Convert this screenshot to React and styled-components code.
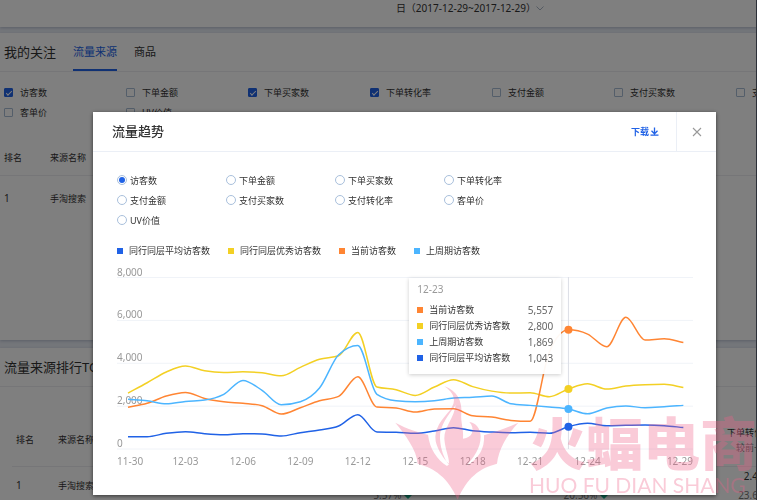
import React, { useState } from "react";
import styled, { createGlobalStyle, css } from "styled-components";

const METRICS = [
  "访客数",
  "下单金额",
  "下单买家数",
  "下单转化率",
  "支付金额",
  "支付买家数",
  "支付转化率",
  "客单价",
  "UV价值"
];

const COLORS = {
  average: "#2062e6",
  top: "#f3d024",
  current: "#ff8533",
  previous: "#4cb5ff"
};

const SERIES = [
  {
    key: "average",
    label: "同行同层平均访客数",
    data: [
      573, 573, 732, 806, 713, 666, 713, 700, 606, 760, 885, 1072, 1600, 792,
      778, 732, 839, 993, 853, 792, 760, 778, 732, 1043, 1198, 1086, 1104,
      1118, 1086, 1002
    ]
  },
  {
    key: "top",
    label: "同行同层优秀访客数",
    data: [
      2610, 3090, 3590, 3870, 3650, 3570, 3600, 3555, 3415, 3810, 4190, 4350,
      5440, 2890, 2765, 2500, 2890, 3230, 2910, 2700, 2610, 2625, 2440, 2800,
      3040, 2795, 2935, 2995, 3015, 2865
    ]
  },
  {
    key: "current",
    label: "当前访客数",
    data: [
      1945, 2130, 2470, 2640, 2360, 2205, 2130, 2020, 1630, 1925, 2250, 2455,
      3370, 1955, 1910, 1725, 1865, 1875, 1550, 1490, 1335, 1290, 4520, 5557,
      5360, 4770, 6140, 5080, 5140, 4970
    ]
  },
  {
    key: "previous",
    label: "上周期访客数",
    data: [
      2315, 2250, 2110, 2220, 2285, 2550, 3200, 2735, 2065, 2205, 2845, 4395,
      4830, 2550, 2250, 2205, 2250, 2375, 2410, 2470, 2110, 2035, 1955, 1869,
      1645, 1910, 2005, 1925, 1970, 2035
    ]
  }
];

const TICKS = [
  [0, "11-30"],
  [3, "12-03"],
  [6, "12-06"],
  [9, "12-09"],
  [12, "12-12"],
  [15, "12-15"],
  [18, "12-18"],
  [21, "12-21"],
  [24, "12-24"],
  [29, "12-29"]
];

const HOVERED = 23;
const TOOLTIP_ORDER = ["current", "top", "previous", "average"];

const xAt = i => 11 + i * 19.15;
const yAt = v => 184 - (v / 8000) * 171.5;

// cubic path that never overshoots its points
const smoothPath = data => {
  const pts = data.map((v, i) => [xAt(i), yAt(v)]);
  const n = pts.length;
  const slopes = pts
    .slice(1)
    .map((p, i) => (p[1] - pts[i][1]) / (p[0] - pts[i][0]));
  const tangents = pts.map((_, i) => {
    if (i === 0) return slopes[0];
    if (i === n - 1) return slopes[n - 2];
    const a = slopes[i - 1];
    const b = slopes[i];
    if (a * b <= 0) return 0;
    return (
      Math.sign(a) *
      Math.min(Math.abs(a), Math.abs(b), Math.abs(a + b) / 4) *
      2
    );
  });
  let d = `M${pts[0][0]},${pts[0][1]}`;
  for (let i = 1; i < n; i++) {
    const [x0, y0] = pts[i - 1];
    const [x1, y1] = pts[i];
    const h = (x1 - x0) / 3;
    d += `C${x0 + h},${y0 + tangents[i - 1] * h},${x1 - h},${
      y1 - tangents[i] * h
    },${x1},${y1}`;
  }
  return d;
};

const TrendChart = () => (
  <ChartBox>
    <Chart viewBox="0 0 577 204" role="img" aria-label="流量趋势">
      {[0, 2000, 4000, 6000, 8000].map(v => (
        <g key={v}>
          <GridLine x1="0" x2="576" y1={yAt(v)} y2={yAt(v)} />
          <AxisText x="0" y={yAt(v) - 2}>
            {v.toLocaleString("en-US")}
          </AxisText>
        </g>
      ))}
      {TICKS.map(([i, label]) => (
        <AxisText
          key={label}
          x={i === 0 ? 0 : i === 29 ? 576 : xAt(i)}
          y="200"
          textAnchor={i === 0 ? "start" : i === 29 ? "end" : "middle"}
        >
          {label}
        </AxisText>
      ))}
      <Crosshair x1={xAt(HOVERED)} x2={xAt(HOVERED)} y1="12" y2="184" />
      {SERIES.map(s => (
        <g key={s.key}>
          <Line d={smoothPath(s.data)} stroke={COLORS[s.key]} />
          <circle
            cx={xAt(HOVERED)}
            cy={yAt(s.data[HOVERED])}
            r="4"
            fill={COLORS[s.key]}
          />
        </g>
      ))}
    </Chart>
    <Tooltip>
      <TooltipDate>12-23</TooltipDate>
      {TOOLTIP_ORDER.map(key => {
        const s = SERIES.find(item => item.key === key);
        return (
          <TooltipRow key={key}>
            <Swatch color={COLORS[key]} />
            {s.label}
            <TooltipValue>
              {s.data[HOVERED].toLocaleString("en-US")}
            </TooltipValue>
          </TooltipRow>
        );
      })}
    </Tooltip>
  </ChartBox>
);

const Watermark = () => (
  <Mark aria-hidden="true">
    <MarkLogo viewBox="0 0 372 342">
      <g transform="translate(-12 -17)">
        <path
          fillRule="evenodd"
          d="M13 127C50 147 85 157 111 163C116 205 138 238 168 257L175 251C158 238 140 208 134 183C128 145 152 118 178 88C198 62 190 38 160 18C197 30 214 62 211 98C208 124 219 148 216 175C230 173 239 168 243 158C247 147 244 135 235 125C255 127 268 145 269 168C269 205 247 232 227 256C262 236 282 205 279 165C315 153 350 142 382 127C346 165 322 210 318 250C266 263 228 292 200 358C172 292 130 263 80 250C78 210 42 162 13 127ZM194 74C172 105 145 135 147 175C149 208 160 236 173 252C178 240 162 207 160 175C159 140 190 112 194 74Z"
        />
      </g>
    </MarkLogo>
    <MarkText>
      <MarkName>火蝠电商</MarkName>
      <MarkLatin>HUO FU DIAN SHANG</MarkLatin>
    </MarkText>
  </Mark>
);

const App = () => {
  const [metric, setMetric] = useState("访客数");
  const [checked, setChecked] = useState(["访客数", "下单买家数", "下单转化率"]);

  const toggle = m =>
    setChecked(
      checked.includes(m) ? checked.filter(c => c !== m) : [...checked, m]
    );

  return (
    <Page>
      <Global />
      <TopBar>
        <DateButton type="button">
          日（2017-12-29~2017-12-29）
          <svg width="8" height="5" viewBox="0 0 8 5" fill="none">
            <path d="M0.5 0.5L4 4L7.5 0.5" stroke="#a9b4c4" />
          </svg>
        </DateButton>
      </TopBar>

      <Panel grow>
        <TabBar>
          <Heading>我的关注</Heading>
          <Tab type="button" active>
            流量来源
          </Tab>
          <Tab type="button">商品</Tab>
        </TabBar>
        <CheckGrid>
          {METRICS.map(m => (
            <Option key={m} gap={7}>
              <Checkbox
                type="checkbox"
                checked={checked.includes(m)}
                onChange={() => toggle(m)}
              />
              {m}
            </Option>
          ))}
        </CheckGrid>
        <Table>
          <colgroup>
            <Col w={50} />
            <col />
          </colgroup>
          <thead>
            <Row h={35}>
              <th>排名</th>
              <th>来源名称</th>
            </Row>
          </thead>
          <tbody>
            <Row h={47} plain>
              <td>
                <Num>1</Num>
              </td>
              <td>手淘搜索</td>
            </Row>
          </tbody>
        </Table>
      </Panel>

      <Panel>
        <TabBar>
          <Heading>流量来源排行TOP10</Heading>
        </TabBar>
        <RankTable>
          <colgroup>
            <Col w={46} />
            <Col w={158} />
            <Col w={196} />
            <Col w={196} />
            <Col w={164} />
          </colgroup>
          <thead>
            <Row h={52}>
              <th>排名</th>
              <th>来源名称</th>
              <NumHead>
                访客数
                <Sub>较前一日</Sub>
              </NumHead>
              <NumHead>
                下单买家数
                <Sub>较前一日</Sub>
              </NumHead>
              <NumHead>
                下单转化率
                <Sub>较前一日</Sub>
              </NumHead>
            </Row>
          </thead>
          <tbody>
            <Row h={39}>
              <td>
                <Num>1</Num>
              </td>
              <td>手淘搜索</td>
              <NumCell>
                3,215
                <Sub>
                  5.57% <Down />
                </Sub>
              </NumCell>
              <NumCell>
                78
                <Sub>
                  20.56% <Down />
                </Sub>
              </NumCell>
              <NumCell>
                2.43%
                <Sub>23.60%</Sub>
              </NumCell>
            </Row>
          </tbody>
        </RankTable>
      </Panel>

      <Overlay>
        <Modal role="dialog" aria-modal="true" aria-labelledby="trend-title">
          <ModalHeader>
            <ModalTitle id="trend-title">流量趋势</ModalTitle>
            <Download type="button">
              下载
              <svg width="9" height="9" viewBox="0 0 9 9" fill="none">
                <path
                  d="M4.5 0.5V6.5M1.5 3.8L4.5 6.8L7.5 3.8M0.5 8.2H8.5"
                  stroke="currentColor"
                  strokeWidth="1.3"
                />
              </svg>
            </Download>
            <Close type="button" aria-label="关闭">
              <svg width="10" height="10" viewBox="0 0 10 10" fill="none">
                <path d="M1 1L9 9M9 1L1 9" stroke="#999" strokeWidth="1.1" />
              </svg>
            </Close>
          </ModalHeader>
          <ModalBody>
            <RadioGrid>
              {METRICS.map(m => (
                <Option key={m} gap={3}>
                  <Radio
                    type="radio"
                    name="metric"
                    checked={metric === m}
                    onChange={() => setMetric(m)}
                  />
                  {m}
                </Option>
              ))}
            </RadioGrid>
            <Legend>
              {SERIES.map(s => (
                <LegendItem key={s.key}>
                  <Swatch color={COLORS[s.key]} />
                  {s.label}
                </LegendItem>
              ))}
            </Legend>
            <TrendChart />
          </ModalBody>
        </Modal>
      </Overlay>
      <Watermark />
    </Page>
  );
};

const Global = createGlobalStyle`
  *, *::before, *::after {
    box-sizing: border-box;
  }
  body {
    margin: 0;
    font-family: "Noto Sans", "Noto Sans CJK SC", sans-serif;
    font-size: 9px;
    color: #333;
  }
  button {
    padding: 0;
    border: 0;
    background: none;
    font: inherit;
    color: inherit;
    cursor: pointer;
  }
`;

const Page = styled.div`
  position: relative;
  display: flex;
  flex-direction: column;
  height: 100vh;
  overflow: hidden;
  background: #e9edf5;
`;

const TopBar = styled.header`
  display: flex;
  justify-content: flex-end;
  margin-bottom: 6px;
  padding: 0 213px 10px 0;
  background: white;
  box-shadow: 0 1px 3px rgba(60, 80, 120, 0.3);
`;

const DateButton = styled.button`
  display: flex;
  align-items: center;
  && {
    font-size: 10px;
    line-height: 17px;
  }
`;

const Panel = styled.section.withConfig({
  shouldForwardProp: p => p !== "grow"
})`
  flex: none;
  margin-bottom: 8px;
  background: white;
  padding-bottom: ${p => (p.grow ? 118 : 20)}px;
  box-shadow: 0 1px 3px rgba(60, 80, 120, 0.3);
`;

const TabBar = styled.div`
  display: flex;
  gap: 17px;
  height: 39px;
  padding-left: 4px;
  border-bottom: 1px solid #ececf0;
`;

const Heading = styled.h2`
  margin: 0;
  font-size: 13px;
  font-weight: 400;
  line-height: 39px;
`;

const Tab = styled.button.withConfig({
  shouldForwardProp: p => p !== "active"
})`
  && {
    border-bottom: 2px solid transparent;
    font-size: 11px;
  }
  ${p =>
    p.active &&
    css`
      && {
        color: #2062e6;
        border-bottom-color: #2062e6;
      }
    `}
`;

const CheckGrid = styled.div`
  display: grid;
  grid-template-columns: repeat(7, minmax(122px, 1fr));
  grid-auto-rows: 20px;
  padding: 10px 0 0 4px;
  overflow: hidden;
`;

const Option = styled.label.withConfig({
  shouldForwardProp: p => p !== "gap"
})`
  display: flex;
  align-items: center;
  gap: ${p => p.gap}px;
  white-space: nowrap;
  cursor: pointer;
`;

const Checkbox = styled.input`
  display: grid;
  place-items: center;
  appearance: none;
  width: 9px;
  height: 9px;
  margin: 0;
  border: 1px solid #a9bdd4;
  border-radius: 1px;
  &:checked {
    border-color: #2062e6;
    background: #2062e6;
  }
  &:checked::after {
    content: "";
    width: 6px;
    height: 3px;
    border: solid white;
    border-width: 0 0 1px 1px;
    transform: rotate(-45deg);
  }
`;

const Radio = styled.input`
  display: grid;
  place-items: center;
  appearance: none;
  width: 10px;
  height: 10px;
  margin: 0;
  border: 1px solid #a9c0dc;
  border-radius: 50%;
  &:checked::after {
    content: "";
    width: 6px;
    height: 6px;
    border-radius: 50%;
    background: #2062e6;
  }
`;

const Table = styled.table`
  width: 100%;
  table-layout: fixed;
  border-collapse: collapse;
  margin-top: 18px;
  th,
  td {
    padding: 0;
    text-align: left;
    font-weight: 400;
    line-height: 15px;
  }
  th:first-child,
  td:first-child {
    padding-left: 4px;
  }
`;

const RankTable = styled(Table)`
  width: 760px;
  margin: 27px 0 0 12px;
`;

const Col = styled.col.withConfig({ shouldForwardProp: p => p !== "w" })`
  width: ${p => p.w}px;
`;

const Row = styled.tr.withConfig({
  shouldForwardProp: p => p !== "h" && p !== "plain"
})`
  height: ${p => p.h}px;
  border-bottom: ${p => (p.plain ? 0 : 1)}px solid #ececf0;
`;

const Num = styled.span`
  font-size: 10px;
`;

const NumHead = styled.th`
  && {
    text-align: right;
  }
`;

const NumCell = styled.td`
  && {
    text-align: right;
    font-size: 10px;
    line-height: 19px;
  }
`;

const Sub = styled.div`
  color: #777;
`;

const Down = styled.span`
  display: inline-block;
  border: 4px solid transparent;
  border-top-color: #18b592;
  border-bottom-width: 0;
`;

const Overlay = styled.div`
  position: fixed;
  inset: 0;
  padding: 112px 40px 0 93px;
  border-right: 1px solid #2c3038;
  background: rgba(0, 0, 0, 0.5);
`;

const Modal = styled.div`
  background: white;
  box-shadow: 0 1px 4px rgba(0, 0, 0, 0.6);
`;

const ModalHeader = styled.div`
  display: flex;
  align-items: stretch;
  height: 40px;
  padding-left: 19px;
  border-bottom: 1px solid #ebeff6;
`;

const ModalTitle = styled.h3`
  flex: 1;
  margin: 0;
  font-size: 13px;
  font-weight: 500;
  line-height: 39px;
`;

const Download = styled.button`
  display: flex;
  align-items: center;
  gap: 1px;
  margin-right: 17px;
  && {
    color: #2062e6;
    font-weight: 700;
  }
`;

const Close = styled.button`
  display: grid;
  place-items: center;
  width: 40px;
  && {
    border-left: 1px solid #ebeff6;
  }
`;

const ModalBody = styled.div`
  padding: 18px 22px 26px 24px;
`;

const RadioGrid = styled.div`
  display: grid;
  grid-template-columns: repeat(4, 109px);
  grid-auto-rows: 20px;
`;

const Legend = styled.div`
  display: flex;
  gap: 18px;
  padding: 12px 0 6px;
  line-height: 17px;
`;

const LegendItem = styled.span`
  display: flex;
  align-items: center;
`;

const Swatch = styled.i`
  width: 6px;
  height: 6px;
  margin-right: 6px;
  background: ${p => p.color};
`;

const ChartBox = styled.div`
  position: relative;
`;

const Chart = styled.svg`
  display: block;
  width: 100%;
`;

const GridLine = styled.line`
  stroke: #f0f3f8;
`;

const AxisText = styled.text`
  font-size: 10px;
  fill: #999;
`;

const Crosshair = styled.line`
  stroke: #dcdfe6;
`;

const Line = styled.path`
  fill: none;
  stroke-width: 1.5px;
`;

const Tooltip = styled.div`
  position: absolute;
  top: 13px;
  right: 23%;
  width: 152px;
  padding: 3px 8px 8px;
  background: rgba(255, 255, 255, 0.95);
  box-shadow: 0 1px 4px rgba(0, 0, 0, 0.2);
`;

const TooltipDate = styled.div`
  margin-bottom: 4px;
  font-size: 10px;
  line-height: 17px;
  color: #999;
`;

const TooltipRow = styled.div`
  display: flex;
  align-items: center;
  line-height: 16px;
`;

const TooltipValue = styled.span`
  margin-left: auto;
  font-size: 10px;
  color: #666;
`;

const Mark = styled.div`
  position: fixed;
  right: 0;
  bottom: 0;
  display: flex;
  align-items: flex-end;
  gap: 10px;
  opacity: 0.33;
  color: #ee638a;
  pointer-events: none;
`;

const MarkLogo = styled.svg`
  width: 124px;
  height: 114px;
  fill: currentColor;
`;

const MarkText = styled.div`
  display: flex;
  flex-direction: column;
  white-space: nowrap;
`;

const MarkName = styled.span`
  font-family: "Noto Sans CJK SC", sans-serif;
  font-size: 57px;
  font-weight: 900;
  line-height: 60px;
`;

const MarkLatin = styled.span`
  font-family: Lato, sans-serif;
  font-size: 21px;
  line-height: 30px;
`;

export default App;
